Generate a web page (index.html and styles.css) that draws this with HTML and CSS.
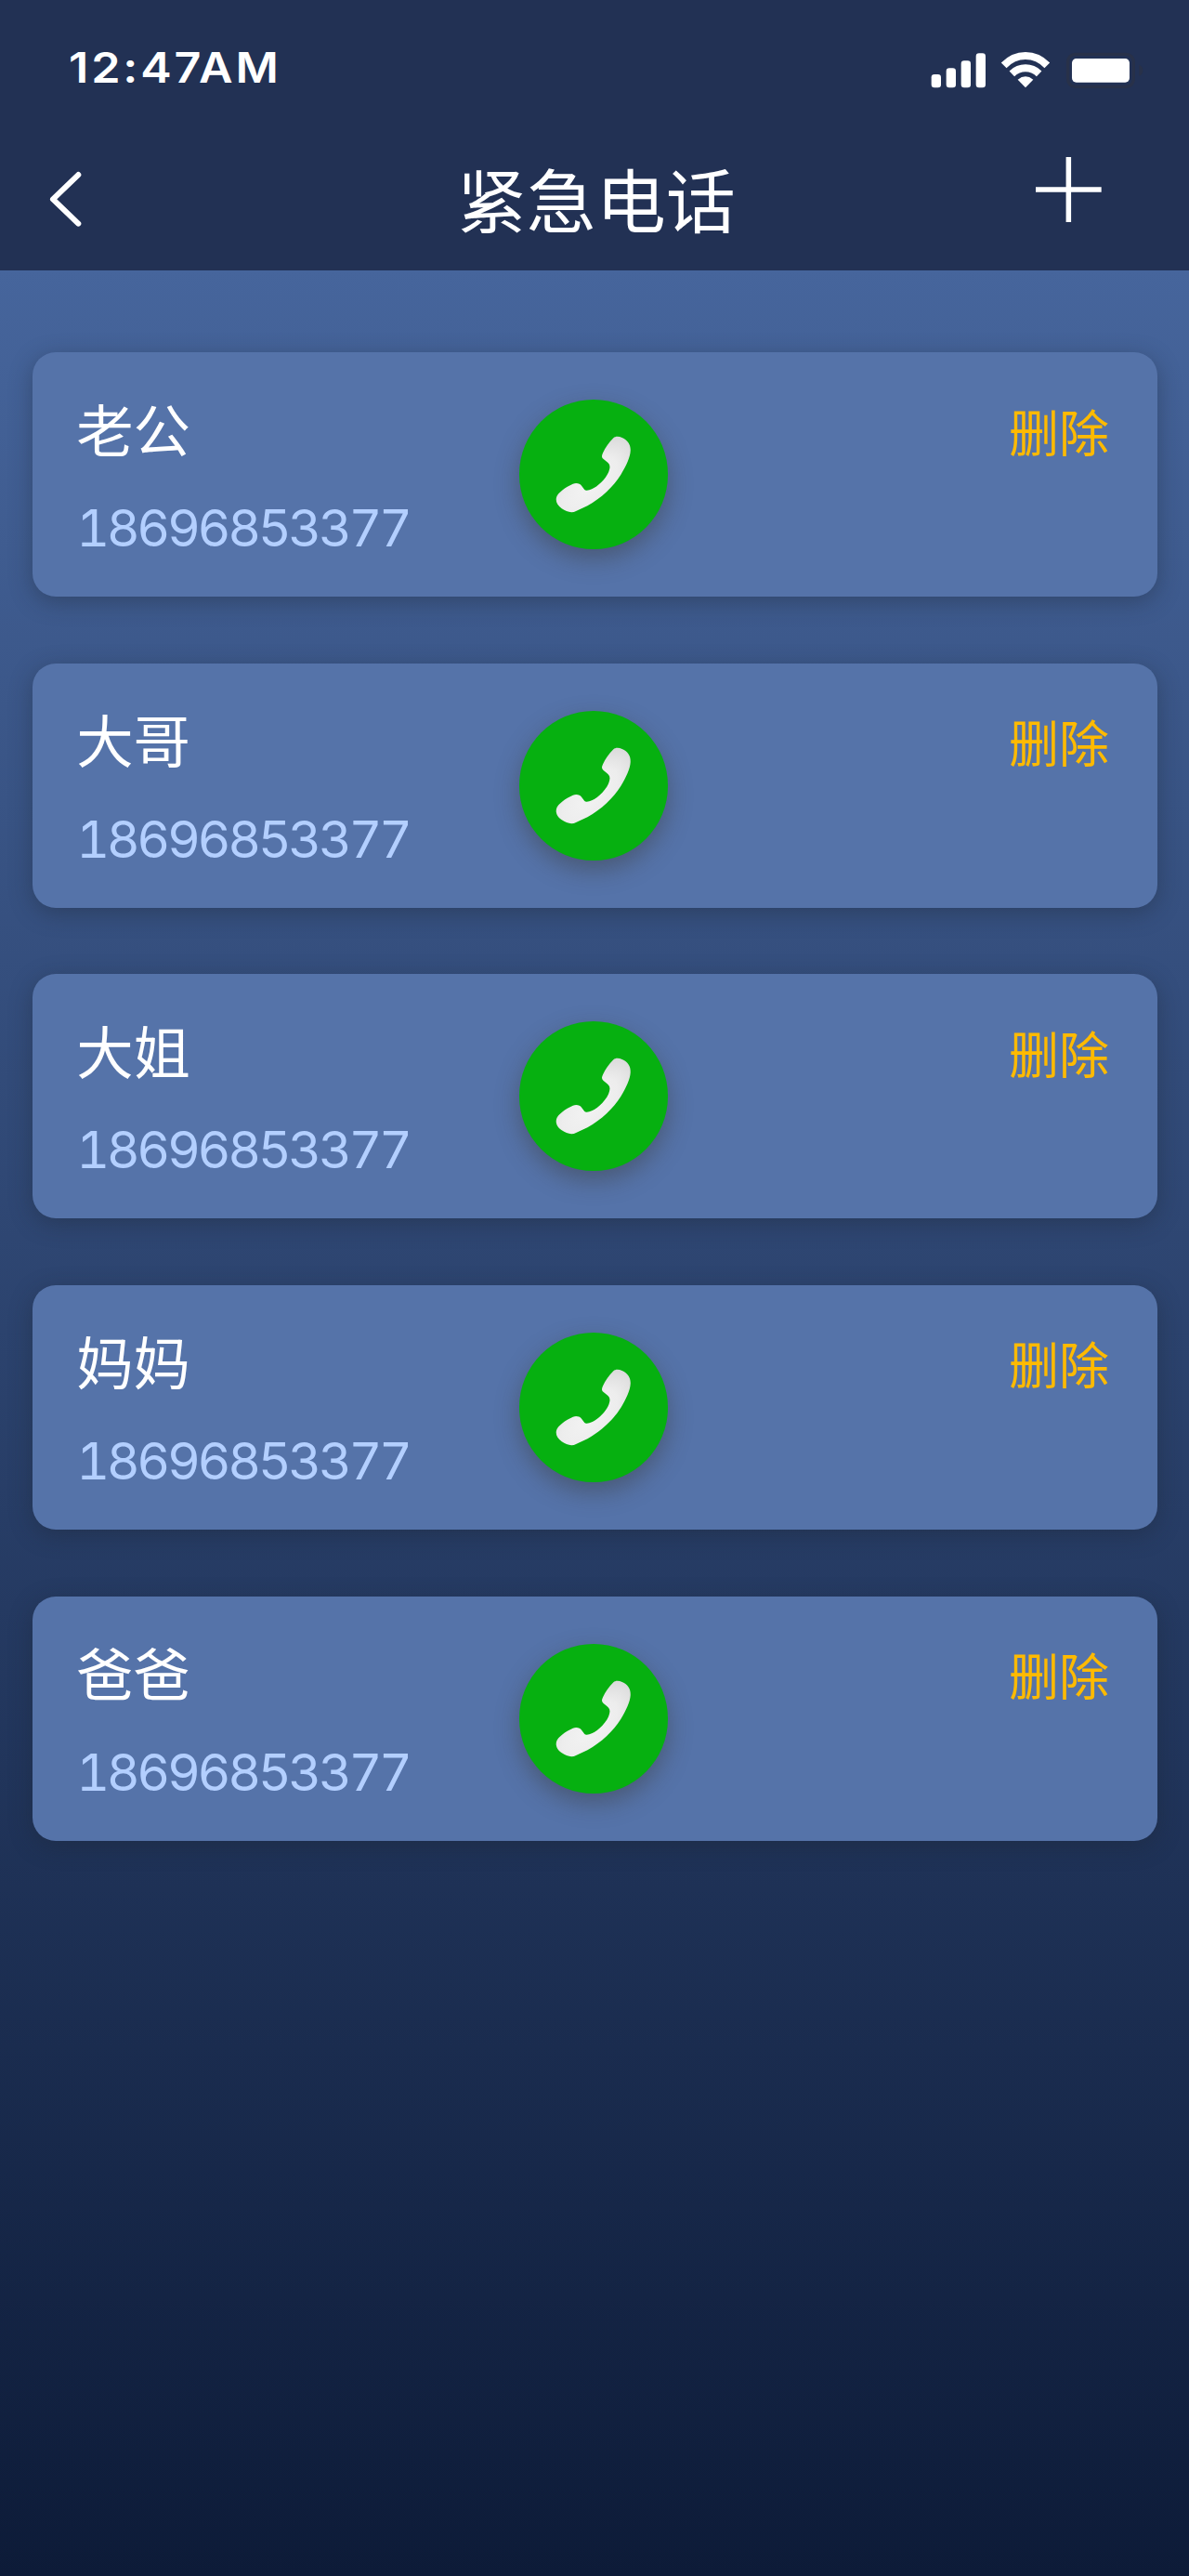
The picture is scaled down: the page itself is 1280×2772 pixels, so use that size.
FILE: index.html
```
<!DOCTYPE html>
<html lang="zh-CN">
<head>
<meta charset="utf-8">
<title>紧急电话</title>
<link rel="stylesheet" href="styles.css">
</head>
<body>
<svg class="defs" aria-hidden="true">
  <defs>
    <radialGradient id="handset-shade" gradientUnits="userSpaceOnUse" cx="335" cy="385" r="190" gradientTransform="rotate(-45 335 385) scale(1 .5) translate(0 330)">
      <stop offset="0" stop-color="#f3f3f3"/>
      <stop offset=".6" stop-color="#ededed"/>
      <stop offset="1" stop-color="#dcdcdc"/>
    </radialGradient>
    <symbol id="handset" viewBox="88 90 481 483">
      <path fill="url(#handset-shade)" d="M392 214C398 208 409 208 420 213C438 221 448 235 447 255C446 276 433 304 416 332C392 371 353 407 308 433L271 450C258 457 240 453 225 442C211 432 204 419 208 405C212 391 237 372 261 362C273 358 284 361 289 368L298 380C303 386 313 383 322 379C343 370 374 340 379 315C382 304 379 296 370 290L359 281C353 276 354 270 358 262C366 245 377 229 392 214Z"/>
    </symbol>
  </defs>
</svg>
<header class="header">
  <div class="status">
    <span class="time">12:47AM</span>
    <svg class="indicators" viewBox="120 155 700 140">
      <g fill="#fff">
        <rect x="128" y="239" width="31" height="43" rx="10"/>
        <rect x="176" y="219" width="31" height="63" rx="10"/>
        <rect x="224" y="195" width="31" height="87" rx="10"/>
        <rect x="272" y="171" width="31" height="111" rx="10"/>
        <path d="M407 256Q432 235 457 256L432 282Z"/>
        <rect x="582" y="188" width="186" height="77" rx="14"/>
        <path d="M799 208Q811 213 811 226Q811 240 799 244Z" fill="#283149"/>
      </g>
      <g fill="none" stroke="#fff" stroke-width="24">
        <path d="M362 210Q392 179 432 179Q472 179 502 210"/>
        <path d="M388 237Q407 219 432 219Q457 219 476 237"/>
      </g>
      <rect x="569" y="174" width="212" height="105" rx="24" fill="none" stroke="#283149" stroke-width="10"/>
    </svg>
  </div>
  <nav class="nav">
    <svg class="back" viewBox="155 548 112 188"><path d="M252 563L170 642L252 721" fill="none" stroke="#fff" stroke-width="18" stroke-linecap="round" stroke-linejoin="round"/></svg>
    <h1 class="title">紧急电话</h1>
    <svg class="add" viewBox="466 507 212 210"><path d="M572 507V717M466 612H678" fill="none" stroke="#fff" stroke-width="16.5"/></svg>
  </nav>
</header>
<main class="list">
  <section class="card">
    <div class="person"><p class="name">老公</p><p class="phone">18696853377</p></div>
    <div class="call"><svg class="handset"><use href="#handset"/></svg></div>
    <span class="remove">删除</span>
  </section>
  <section class="card">
    <div class="person"><p class="name">大哥</p><p class="phone">18696853377</p></div>
    <div class="call"><svg class="handset"><use href="#handset"/></svg></div>
    <span class="remove">删除</span>
  </section>
  <section class="card">
    <div class="person"><p class="name">大姐</p><p class="phone">18696853377</p></div>
    <div class="call"><svg class="handset"><use href="#handset"/></svg></div>
    <span class="remove">删除</span>
  </section>
  <section class="card">
    <div class="person"><p class="name">妈妈</p><p class="phone">18696853377</p></div>
    <div class="call"><svg class="handset"><use href="#handset"/></svg></div>
    <span class="remove">删除</span>
  </section>
  <section class="card">
    <div class="person"><p class="name">爸爸</p><p class="phone">18696853377</p></div>
    <div class="call"><svg class="handset"><use href="#handset"/></svg></div>
    <span class="remove">删除</span>
  </section>
</main>
</body>
</html>
```
FILE: styles.css
```
* { box-sizing: border-box; }

body {
  margin: 0;
  width: 1280px;
  height: 2772px;
  display: flex;
  flex-direction: column;
  font-family: "Noto Sans CJK SC", sans-serif;
  color: #fff;
  background: #0d1b38;
}

.defs { position: absolute; width: 0; height: 0; }

.header {
  height: 290.5px;
  flex: none;
  background: #223154;
}

.status {
  height: 145px;
  padding: 0 46.7px 0 74px;
  display: flex;
  justify-content: space-between;
  align-items: center;
}

.time {
  font: 600 45.5px/60px Inter, sans-serif;
  letter-spacing: 2.6px;
  transform: scaleX(1.105);
  transform-origin: left;
}

.indicators { width: 233.3px; height: 46.7px; margin-top: 5px; }

.nav {
  height: 145px;
  padding: 0 94px 0 51.7px;
  display: grid;
  grid-template-columns: 1fr auto 1fr;
  align-items: start;
}

.back { width: 37.3px; height: 62.7px; margin-top: 37.7px; }

.title {
  margin: 18px 0 0 46px;
  font-size: 75px;
  line-height: 100px;
  font-weight: 400;
}

.add { width: 70.7px; height: 70px; margin-top: 24px; justify-self: end; }

.list {
  flex: 1;
  padding: 88.7px 34px 0 34.7px;
  display: flex;
  flex-direction: column;
  gap: 71.6px;
  background: linear-gradient(#46659c, #0d1b38);
}

.card {
  height: 263px;
  flex: none;
  padding: 0 52px 0 47.5px;
  border-radius: 25px;
  display: grid;
  grid-template-columns: 1fr 160.5px 1fr;
  background: #5573a9;
  box-shadow: 0 6px 24px rgba(28, 36, 48, .36);
}

.person { padding-top: 41.5px; }

.name {
  margin: 0;
  font-size: 61.4px;
  line-height: 80px;
}

.phone {
  margin: 32.5px 0 0;
  font: 370 55.5px/70px Inter, sans-serif;
  font-variant-numeric: tabular-nums;
  letter-spacing: -3.4px;
  color: #b3cfff;
}

.call {
  width: 160.5px;
  height: 161px;
  margin: 51px 0 0 .8px;
  border-radius: 50%;
  background: #06b010;
  box-shadow: 0 10px 26px rgba(60, 60, 60, .48);
}

.handset { display: block; width: 100%; height: 100%; }

.remove {
  padding-top: 44.5px;
  justify-self: end;
  font-size: 54px;
  line-height: 80px;
  color: #ffba00;
}
```
